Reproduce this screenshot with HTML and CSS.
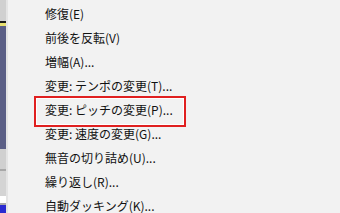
FILE: index.html
```html
<!DOCTYPE html>
<html>
<head>
    <title>Effect Menu</title>
    <link rel="stylesheet" href="styles.css">
</head>
<body>
<div class="screen">
  <div class="side">
    <div class="side-top"></div>
    <div class="side-dark"></div>
    <div class="side-yellow"></div>
    <div class="side-track"></div>
    <div class="side-gray"></div>
    <div class="side-line"></div>
    <div class="side-gray2"></div>
    <div class="side-white"></div>
    <div class="side-line"></div>
    <div class="side-blue"></div>
  </div>
  <div class="menu">
    <ul>
      <li>修復(E)</li>
      <li>前後を反転(V)</li>
      <li>増幅(A)...</li>
      <li>変更: テンポの変更(T)...</li>
      <li class="marked">変更: ピッチの変更(P)...</li>
      <li>変更: 速度の変更(G)...</li>
      <li>無音の切り詰め(U)...</li>
      <li>繰り返し(R)...</li>
      <li>自動ダッキング(K)...</li>
    </ul>
  </div>
</div>
</body>
</html>
```

FILE: styles.css
```css
body {
    margin: 0;
    background-color: #f2f2f2;
    font-family: "Noto Sans CJK JP", "Noto Sans", sans-serif;
    overflow: hidden;
}
.screen {
    display: flex;
    height: 213px;
}
.side {
    width: 6px;
    display: flex;
    flex-direction: column;
    border-right: 2px solid #e4e4e4;
    background-color: #d2d2d2;
}
.side-top {
    height: 21px;
    background-color: #d0d0d0;
}
.side-dark {
    height: 2px;
    background-color: #1a1a1a;
}
.side-yellow {
    height: 3px;
    background-color: #e8e070;
}
.side-track {
    height: 123px;
    background-color: #5b5f86;
}
.side-gray {
    height: 20px;
    background-color: #d0d0d0;
}
.side-line {
    height: 2px;
    background-color: #a8a8a8;
}
.side-gray2 {
    height: 25px;
    background-color: #d4d4d4;
}
.side-white {
    height: 7px;
    background-color: #ffffff;
}
.side-blue {
    flex: 1;
    background-color: #2a2ad0;
}
.menu {
    flex: 1;
    padding-top: 2px;
}
ul {
    list-style: none;
    margin: 0;
    padding: 0;
}
li {
    position: relative;
    height: 24px;
    line-height: 24px;
    padding-left: 37px;
    font-size: 12px;
    color: #111111;
    white-space: nowrap;
}
/* annotation box around the highlighted item */
.marked::after {
    content: "";
    position: absolute;
    left: 26px;
    top: -2px;
    width: 148px;
    height: 27px;
    border: 2px solid #e02020;
    box-shadow: inset 0 0 0 1px #ffffff;
}
```
